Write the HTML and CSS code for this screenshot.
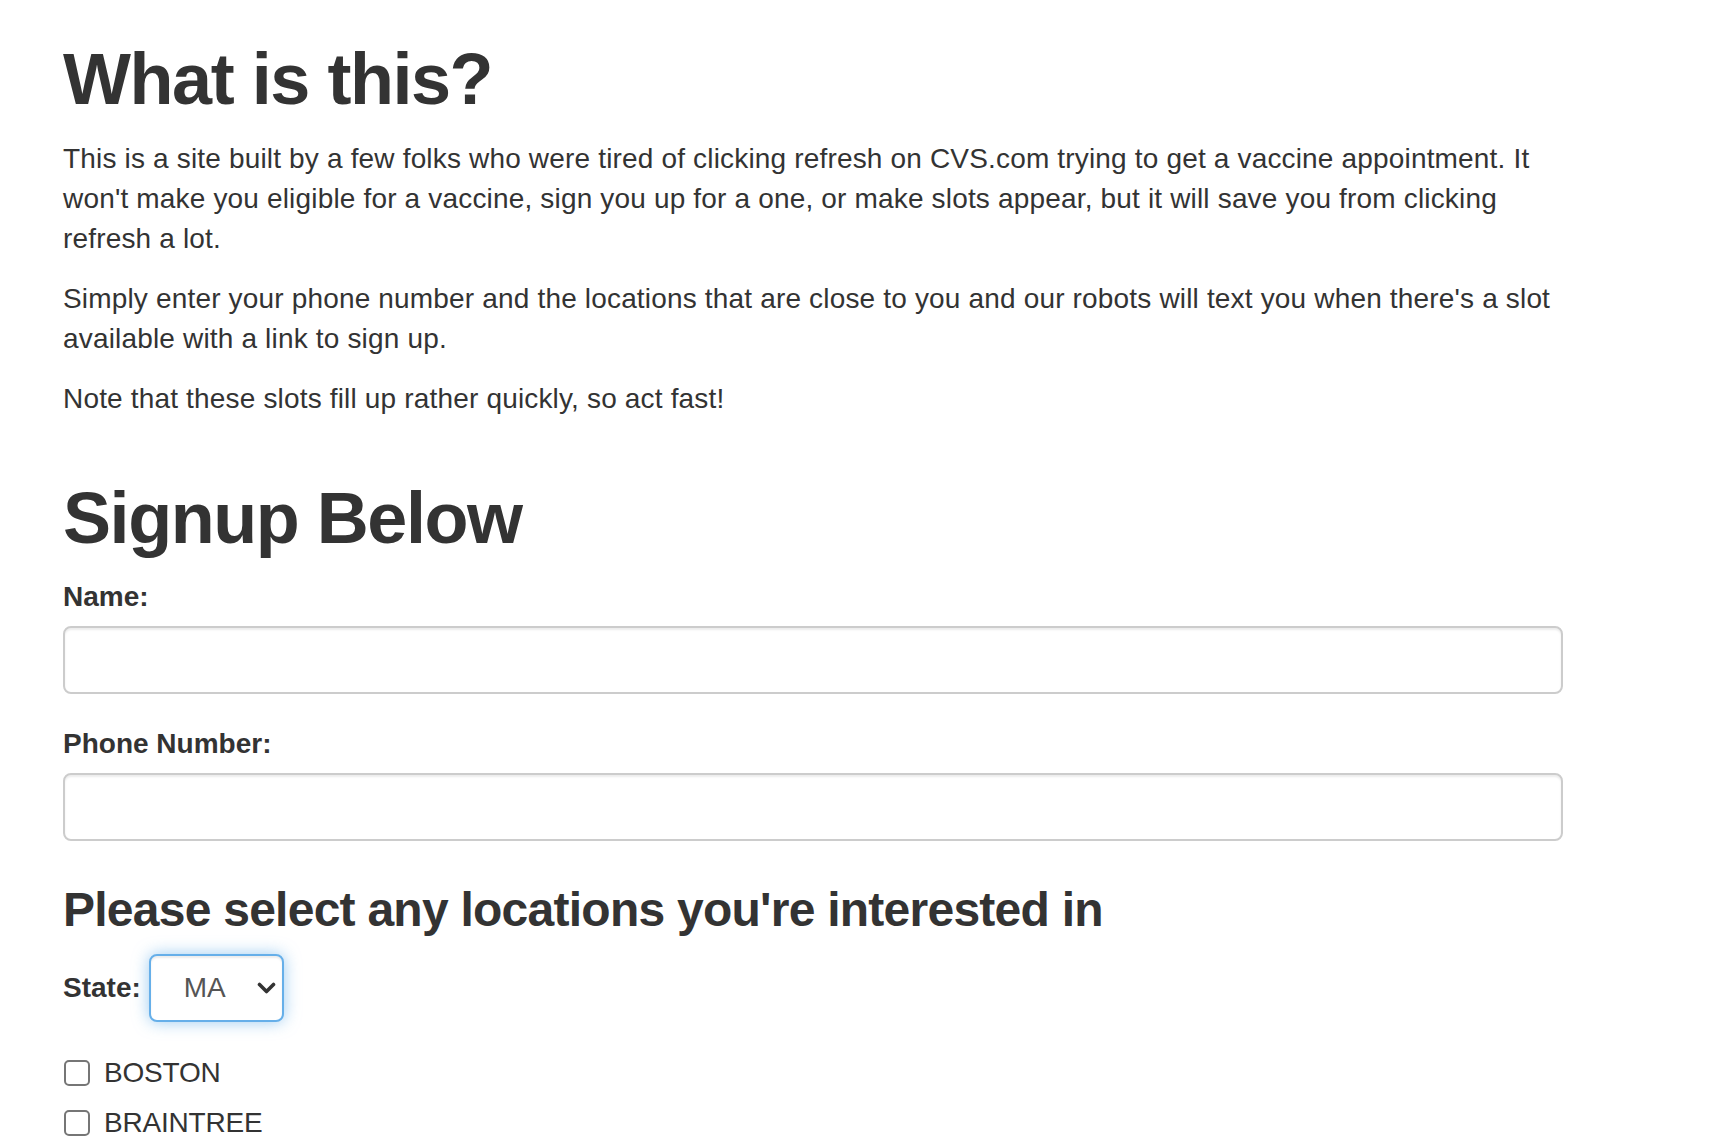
FILE: index.html
```html
<!DOCTYPE html>
<html lang="en">
<head>
<meta charset="utf-8">
<title>What is this?</title>
<link rel="stylesheet" href="styles.css">
</head>
<body>
<div class="page">
  <h1 class="title">What is this?</h1>
  <p>This is a site built by a few folks who were tired of clicking refresh on CVS.com trying to get a vaccine appointment. It won't make you eligible for a vaccine, sign you up for a one, or make slots appear, but it will save you from clicking refresh a lot.</p>
  <p>Simply enter your phone number and the locations that are close to you and our robots will text you when there's a slot available with a link to sign up.</p>
  <p>Note that these slots fill up rather quickly, so act fast!</p>

  <form class="signup">
    <h1 class="title title-form">Signup Below</h1>
    <div class="form-group">
      <label class="field-label" for="name">Name:</label>
      <input class="form-control" id="name" type="text">
    </div>
    <div class="form-group">
      <label class="field-label" for="phone">Phone Number:</label>
      <input class="form-control" id="phone" type="tel">
    </div>

    <h3 class="subtitle">Please select any locations you're interested in</h3>
    <div class="form-group state-row">
      <label class="field-label state-label" for="state">State:</label>
      <span class="select-wrap">
        <select class="state-select" id="state">
          <option>MA</option>
        </select>
        <svg class="chevron" width="19" height="12" viewBox="0 0 19 12" aria-hidden="true"><polyline points="2.5,2.5 9.5,9.5 16.5,2.5" fill="none" stroke="#333" stroke-width="3.6" stroke-linecap="round" stroke-linejoin="round"/></svg>
      </span>
    </div>

    <div class="check-row">
      <input class="check" type="checkbox" id="boston">
      <label class="check-label" for="boston">BOSTON</label>
    </div>
    <div class="check-row">
      <input class="check" type="checkbox" id="braintree">
      <label class="check-label" for="braintree">BRAINTREE</label>
    </div>
  </form>
</div>
</body>
</html>
```

FILE: styles.css
```css
html, body {
  margin: 0;
  padding: 0;
  background: #fff;
}

body {
  font-family: "Liberation Sans", Arial, Helvetica, sans-serif;
  font-size: 28px;
  line-height: 40px;
  color: #333;
}

.page {
  padding-left: 63px;
  width: 1500px;
}

.title {
  font-size: 72px;
  line-height: 1.1;
  font-weight: 700;
  letter-spacing: -1.45px;
  margin: 40px 0 20px;
}

.title-form {
  margin-bottom: 19px;
}

p {
  margin: 0 0 20px;
  letter-spacing: 0.17px;
}

.signup {
  display: flow-root;
}

.form-group {
  margin-bottom: 30px;
}

.field-label {
  display: block;
  font-weight: 700;
  font-size: 28px;
  margin-bottom: 9px;
}

.form-control {
  display: block;
  box-sizing: border-box;
  width: 100%;
  height: 68px;
  margin: 0;
  padding: 12px 24px;
  font: inherit;
  color: #555;
  background: #fff;
  border: 2px solid #ccc;
  border-radius: 8px;
  box-shadow: inset 0 2px 2px rgba(0, 0, 0, 0.075);
  outline: none;
}

.subtitle {
  font-size: 48px;
  line-height: 1.1;
  font-weight: 700;
  letter-spacing: -0.75px;
  margin: 43px 0 17px;
}

.state-row {
  display: flex;
  align-items: center;
  gap: 8px;
  margin-bottom: 31px;
}

.state-label {
  margin-bottom: 0;
}

.select-wrap {
  position: relative;
  display: inline-block;
}

.state-select {
  -webkit-appearance: none;
  appearance: none;
  box-sizing: border-box;
  width: 135px;
  height: 68px;
  margin: 0;
  padding: 0 0 0 33px;
  font: inherit;
  color: #555;
  background: #fff;
  border: 2px solid #66afe9;
  border-radius: 8px;
  box-shadow: inset 0 2px 2px rgba(0, 0, 0, 0.075), 0 0 16px rgba(102, 175, 233, 0.65);
  outline: none;
}

.chevron {
  position: absolute;
  left: 108px;
  top: 28px;
  pointer-events: none;
}

.check-row {
  display: flex;
  align-items: center;
  height: 40px;
  margin-bottom: 10px;
}

.check {
  -webkit-appearance: none;
  appearance: none;
  box-sizing: border-box;
  width: 26px;
  height: 26px;
  margin: 0 14px 0 1px;
  border: 2px solid #767676;
  border-radius: 5px;
  background: #fff;
}

.check-label {
  font-weight: 400;
  letter-spacing: -0.2px;
}
```
